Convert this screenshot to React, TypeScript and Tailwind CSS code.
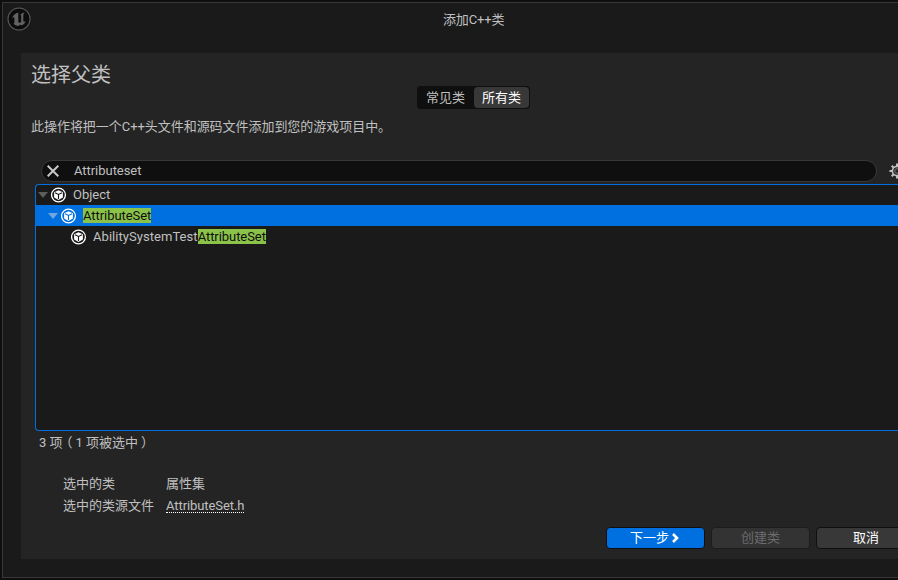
import type { ReactNode } from "react";

function UnrealLogo() {
  return (
    <svg viewBox="0 0 24 24" className="size-6 shrink-0">
      <circle cx="12" cy="12" r="11" fill="#0c0c0c" stroke="#585858" strokeWidth="1.1" />
      <path
        d="M11.200 5.600C8.600 6.200 6 8.300 4.900 11.400c.9-.9 1.600-1.200 2-1 .4.1.5.5.5 1v4.200c0 .7-.5.9-1.100.8 1.200 1.600 3.200 2.400 5.400 2.500l1.400-1.400 1.500 1.100c2-.9 3.500-2.600 4.200-4.800-.9.8-1.600 1.100-2.100.8-.3-.2-.4-.5-.4-.9V8.200c0-1 .6-1.800 1.600-2.600-1.800.2-3.600 1.100-4.700 2.300.6-.1 1 .2 1 .9v6.200c-.4.5-.9.8-1.500.8-.9 0-1.400-.5-1.400-1.500V7.600c0-.9-.2-1.600-.1-2z"
        fill="#626262"
      />
    </svg>
  );
}

function ClassIcon({ edge = "#1a1a1a" }: { edge?: string }) {
  return (
    <svg viewBox="0 0 16 16" className="size-4 shrink-0" fill="none">
      <circle cx="7.500" cy="8" r="6.900" stroke="#fff" strokeWidth="1.300" />
      <path d="M7.500 3.200 11.900 5.200V10.500L7.500 12.900 3.100 10.500V5.200Z" fill="#fff" />
      <path d="M4 5.800 7.500 7.500 11 5.800M7.500 7.500V12" stroke={edge} strokeWidth="1.100" />
    </svg>
  );
}

function Arrow({ className }: { className: string }) {
  return (
    <svg viewBox="0 0 10 6" className={`h-1.5 w-2.5 shrink-0 ${className}`}>
      <path d="M0 0h10L5 6z" fill="currentColor" />
    </svg>
  );
}

function GearIcon() {
  return (
    <svg viewBox="0 0 16 16" className="size-4 shrink-0" fill="none" stroke="#c0c0c0">
      <circle cx="8" cy="8" r="4.600" strokeWidth="1.600" />
      <circle cx="8" cy="8" r="2.300" stroke="#777" />
      <path
        d="M8 .5v3M8 12.500v3M.5 8h3M12.500 8h3M2.700 2.700l2 2M11.300 11.300l2 2M2.700 13.300l2-2M11.300 4.700l2-2"
        strokeWidth="2"
      />
    </svg>
  );
}

function Match({ children }: { children: ReactNode }) {
  return <span className="bg-[#8bc24a] text-[#0f0f0f]">{children}</span>;
}

export default function App() {
  return (
    <div className="h-[580px] w-[898px] overflow-hidden bg-[#0f0f0f] pt-0.5 pl-0.5 font-['Roboto','Noto_Sans_CJK_SC',sans-serif] text-[13px] leading-4 whitespace-nowrap text-[#c0c0c0]">
      <div className="flex h-[576px] flex-col border-y border-l border-[#383838] bg-[#1a1a1a]">
        <header className="flex h-[50px] shrink-0 items-start pt-1 pl-1">
          <UnrealLogo />
          <h1 className="mt-[5px] ml-[412px] tracking-[-0.150px]">添加C++类</h1>
        </header>

        <main className="ml-[18px] flex h-[506px] flex-col bg-[#242424]">
          <h2 className="h-[33px] pt-[11px] pl-2.5 text-xl leading-[22px]">选择父类</h2>
          <div className="ml-[396px] flex h-[23px] w-[113px] rounded bg-[#0f0f0f] p-px leading-[21px]">
            <button className="w-14 pr-px text-center">常见类</button>
            <button className="w-[55px] rounded bg-[#383838] text-center text-white">所有类</button>
          </div>
          <p className="h-[51px] pt-[10px] pl-2.5 tracking-[-0.040px]">
            此操作将把一个C++头文件和源码文件添加到您的游戏项目中。
          </p>

          <div className="flex h-[22px] items-center pl-5">
            <div className="flex h-[22px] w-[836px] shrink-0 items-center rounded-full border border-[#383838] bg-[#0f0f0f] pl-[5px]">
              <svg viewBox="0 0 12 12" className="size-3 shrink-0">
                <path d="M.7.7l10.600 10.600M11.300.7L.7 11.300" stroke="#c8c8c8" strokeWidth="2" />
              </svg>
              <span className="ml-[15px] tracking-[-0.040px]">Attributeset</span>
            </div>
            <div className="ml-3">
              <GearIcon />
            </div>
          </div>

          <div className="mt-[2px] ml-[14px] h-[247px] rounded-l border-y border-l border-[#0070e0] bg-[#1a1a1a]">
            <div className="flex h-5 items-center pl-0.5">
              <Arrow className="text-[#5c5c5c]" />
              <span className="ml-[3px]">
                <ClassIcon />
              </span>
              <span className="ml-1.5">Object</span>
            </div>
            <div className="flex h-[21px] items-center bg-[#0070e0] pl-3">
              <Arrow className="text-[#72a6dc]" />
              <span className="ml-[3px]">
                <ClassIcon edge="#0070e0" />
              </span>
              <span className="ml-1.5 tracking-[-0.060px]">
                <Match>AttributeSet</Match>
              </span>
            </div>
            <div className="flex h-[21px] items-center pl-[35px]">
              <ClassIcon />
              <span className="ml-1.5 tracking-[0.050px]">AbilitySystemTest</span>
              <span className="tracking-[-0.060px]">
                <Match>AttributeSet</Match>
              </span>
            </div>
          </div>

          <p className="mt-1 h-4 pl-[18px]">
            3 项<span className="mr-[3px] ml-[3.5px] [font-feature-settings:'halt']">（</span>1 项被选中
            <span className="ml-[3px] [font-feature-settings:'halt']">）</span>
          </p>

          <dl className="mt-[25px] grid grid-cols-[103px_1fr] gap-y-1.5 pl-[42px]">
            <dt>选中的类</dt>
            <dd>属性集</dd>
            <dt>选中的类源文件</dt>
            <dd className="h-4">
              <a className="inline-block h-[15px] border-b border-dotted border-white leading-4 tracking-[-0.080px]">
                AttributeSet.h
              </a>
            </dd>
          </dl>

          <div className="mt-[13px] ml-[585px] flex gap-[6px] leading-5">
            <button className="flex h-[22px] w-[99px] shrink-0 items-center justify-center rounded border border-[#0f0f0f] bg-[#0070e0] pr-[2px] text-white">
              下一步
              <svg viewBox="0 0 7 10" className="ml-[3px] h-[10px] w-[7px]" fill="none">
                <path d="M1 1l4 4-4 4" stroke="#fff" strokeWidth="2.600" />
              </svg>
            </button>
            <button className="h-[22px] w-[99px] shrink-0 rounded border border-[#1c1c1c] bg-[#333] text-[#6c6c6c]">
              创建类
            </button>
            <button className="h-[22px] w-[100px] shrink-0 rounded border border-[#0f0f0f] bg-[#383838] text-white">
              取消
            </button>
          </div>
        </main>
      </div>
    </div>
  );
}
